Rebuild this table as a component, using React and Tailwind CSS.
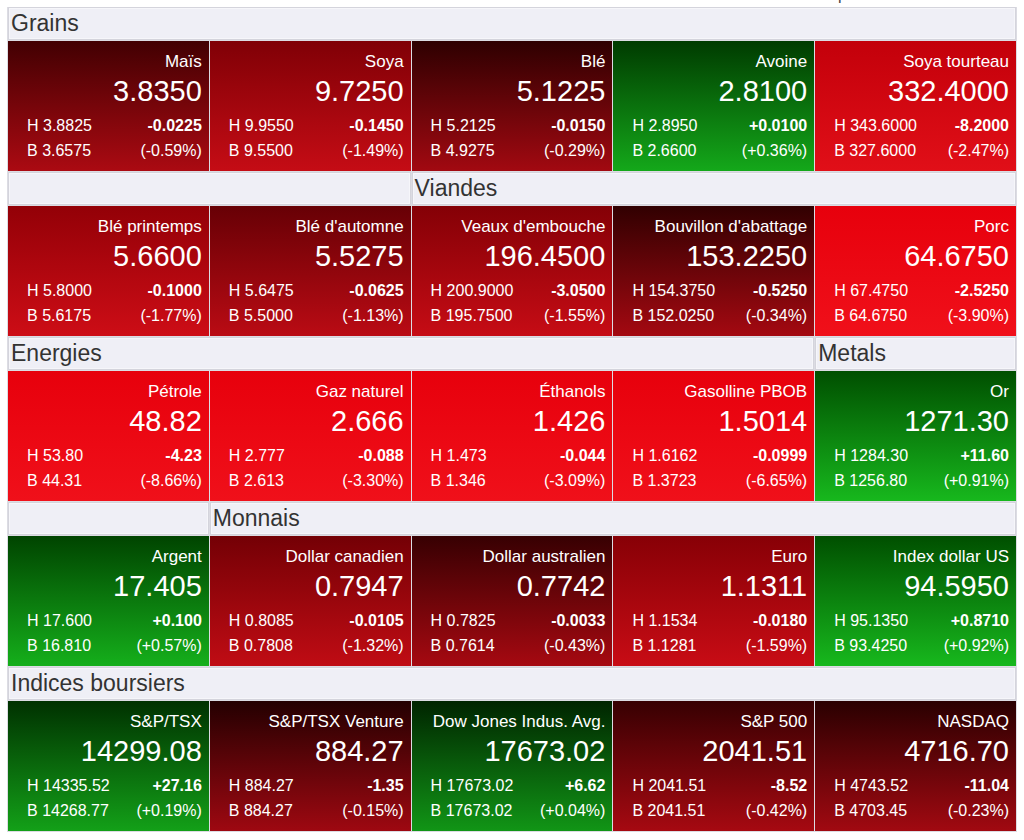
import React from "react";

const sections = [
  {
    headers: [{ span: 5, label: "Grains" }],
    tiles: [
      ["Maïs", "3.8350", "3.8825", "3.6575", "-0.0225", -0.59],
      ["Soya", "9.7250", "9.9550", "9.5500", "-0.1450", -1.49],
      ["Blé", "5.1225", "5.2125", "4.9275", "-0.0150", -0.29],
      ["Avoine", "2.8100", "2.8950", "2.6600", "+0.0100", 0.36],
      ["Soya tourteau", "332.4000", "343.6000", "327.6000", "-8.2000", -2.47],
    ],
  },
  {
    headers: [
      { span: 2, label: "" },
      { span: 3, label: "Viandes" },
    ],
    tiles: [
      ["Blé printemps", "5.6600", "5.8000", "5.6175", "-0.1000", -1.77],
      ["Blé d'automne", "5.5275", "5.6475", "5.5000", "-0.0625", -1.13],
      ["Veaux d'embouche", "196.4500", "200.9000", "195.7500", "-3.0500", -1.55],
      ["Bouvillon d'abattage", "153.2250", "154.3750", "152.0250", "-0.5250", -0.34],
      ["Porc", "64.6750", "67.4750", "64.6750", "-2.5250", -3.9],
    ],
  },
  {
    headers: [
      { span: 4, label: "Energies" },
      { span: 1, label: "Metals" },
    ],
    tiles: [
      ["Pétrole", "48.82", "53.80", "44.31", "-4.23", -8.66],
      ["Gaz naturel", "2.666", "2.777", "2.613", "-0.088", -3.3],
      ["Éthanols", "1.426", "1.473", "1.346", "-0.044", -3.09],
      ["Gasolline PBOB", "1.5014", "1.6162", "1.3723", "-0.0999", -6.65],
      ["Or", "1271.30", "1284.30", "1256.80", "+11.60", 0.91],
    ],
  },
  {
    headers: [
      { span: 1, label: "" },
      { span: 4, label: "Monnais" },
    ],
    tiles: [
      ["Argent", "17.405", "17.600", "16.810", "+0.100", 0.57],
      ["Dollar canadien", "0.7947", "0.8085", "0.7808", "-0.0105", -1.32],
      ["Dollar australien", "0.7742", "0.7825", "0.7614", "-0.0033", -0.43],
      ["Euro", "1.1311", "1.1534", "1.1281", "-0.0180", -1.59],
      ["Index dollar US", "94.5950", "95.1350", "93.4250", "+0.8710", 0.92],
    ],
  },
  {
    headers: [{ span: 5, label: "Indices boursiers" }],
    tiles: [
      ["S&P/TSX", "14299.08", "14335.52", "14268.77", "+27.16", 0.19],
      ["S&P/TSX Venture", "884.27", "884.27", "884.27", "-1.35", -0.15],
      ["Dow Jones Indus. Avg.", "17673.02", "17673.02", "17673.02", "+6.62", 0.04],
      ["S&P 500", "2041.51", "2041.51", "2041.51", "-8.52", -0.42],
      ["NASDAQ", "4716.70", "4743.52", "4703.45", "-11.04", -0.23],
    ],
  },
];

const spanClass = {
  1: "col-span-1",
  2: "col-span-2",
  3: "col-span-3",
  4: "col-span-4",
  5: "col-span-5",
};

function gradientFor(pct) {
  const c = (v) => Math.round(Math.max(0, Math.min(255, v)));
  if (pct < 0) {
    const t = Math.min(-pct / 3, 1);
    const top = `rgb(${c(26 + 205 * t)},0,${c(12 * t)})`;
    const bottom = `rgb(${c(154 + 86 * t)},${c(8 + 8 * t)},${c(16 + 10 * t)})`;
    return `linear-gradient(to bottom, ${top}, ${bottom})`;
  }
  const s = Math.sqrt(Math.min(pct / 3, 1));
  const top = `rgb(0,${c(24 + 100 * s)},0)`;
  const bottom = `rgb(${c(16 + 12 * s)},${c(140 + 80 * s)},${c(20 + 16 * s)})`;
  return `linear-gradient(to bottom, ${top}, ${bottom})`;
}

function fmtPct(p) {
  const sign = p >= 0 ? "+" : "-";
  return `(${sign}${Math.abs(p).toFixed(2)}%)`;
}

function Tile({ t }) {
  const [name, value, hi, lo, chg, pct] = t;
  return (
    <div
      className="h-[130px] pt-[11px] text-white flex flex-col"
      style={{ backgroundImage: gradientFor(pct) }}
    >
      <div className="text-right pr-[7px] text-[17px] leading-[20px] whitespace-nowrap">{name}</div>
      <div className="text-right pr-[7px] text-[29px] leading-[34px] mt-[2px]">{value}</div>
      <div className="mt-[5px] pl-[19px] pr-[7px] text-[16px] leading-[25px]">
        <div className="flex justify-between">
          <span>H {hi}</span>
          <span className="font-bold">{chg}</span>
        </div>
        <div className="flex justify-between">
          <span>B {lo}</span>
          <span>{fmtPct(pct)}</span>
        </div>
      </div>
    </div>
  );
}

function Header({ h }) {
  return (
    <div
      className={`${spanClass[h.span]} h-[33px] bg-[#efeff6] border border-[#d4d4dc] shadow-[inset_0_0_0_1px_#f6f6fa] flex items-center pl-[2px] text-[23px] text-[#333333] leading-none`}
    >
      {h.label}
    </div>
  );
}

export default function App() {
  return (
    <div
      className="relative w-[1024px] h-[840px] bg-white overflow-hidden"
      style={{ fontFamily: '"Liberation Sans", Arial, sans-serif' }}
    >
      <div className="absolute top-[-13px] left-[838px] text-[16px] leading-[16px] text-[#444]">p</div>
      <div className="ml-[7px] pt-[7px]">
        <div className="w-[1010px] bg-[#dcdce3] grid grid-cols-5 gap-px px-px pb-px">
          {sections.map((sec, i) => (
            <React.Fragment key={i}>
              {sec.headers.map((h, j) => (
                <Header key={`h${j}`} h={h} />
              ))}
              {sec.tiles.map((t, j) => (
                <Tile key={`t${j}`} t={t} />
              ))}
            </React.Fragment>
          ))}
        </div>
      </div>
    </div>
  );
}
